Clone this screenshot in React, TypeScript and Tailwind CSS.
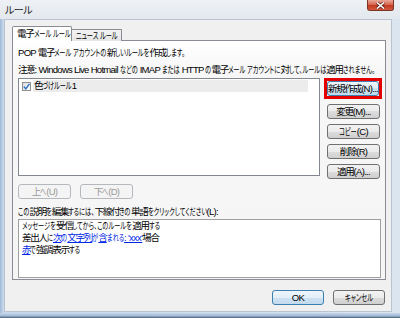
import React, { useLayoutEffect, useRef, useState } from 'react';

const font = "font-['Liberation_Sans','Noto_Sans_CJK_JP',sans-serif] [font-feature-settings:'palt']";

// kana are drawn narrower in the original UI font, so squeeze them
const Kana: React.FC<{ text: string }> = ({ text }) => {
  const ref = useRef<HTMLSpanElement>(null);
  const [mr, setMr] = useState(0);
  useLayoutEffect(() => {
    if (ref.current) setMr(-ref.current.offsetWidth * 0.35);
  }, [text]);
  return (
    <span ref={ref} className="inline-block origin-left scale-x-[0.65]" style={{ marginRight: mr }}>
      {text}
    </span>
  );
};

const J: React.FC<{ children: string }> = ({ children }) => {
  const parts = children.match(/[\u3000-\u30ff\uff00-\uffef]+|[\u4e00-\u9fff]+|[^\u3000-\u30ff\uff00-\uffef\u4e00-\u9fff]+/g) || [];
  return (
    <>
      {parts.map((p, i) => {
        if (/^[\u3000-\u30ff\uff00-\uffef]/.test(p)) return <Kana key={i} text={p} />;
        if (/^[\u4e00-\u9fff]/.test(p)) return <span key={i} className="tracking-[-1.2px]">{p}</span>;
        return <span key={i} className="whitespace-pre tracking-[-0.7px]">{p}</span>;
      })}
    </>
  );
};

const Btn: React.FC<{ label: string; w?: string; disabled?: boolean; def?: boolean }> = ({ label, w = 'w-[53px]', disabled, def }) => {
  let cls = 'border-[#707070] bg-[linear-gradient(#f2f2f2_0%,#ebebeb_50%,#dddddd_50%,#cfcfcf_100%)] text-black';
  if (disabled) cls = 'border-[#b5b9bd] bg-[#f4f4f4] text-[#9a9a9a]';
  if (def) cls = 'border-[#3c7fb1] bg-[linear-gradient(#eef5fb_0%,#e3eef8_50%,#cfe2f1_50%,#c3daee_100%)] text-black';
  return (
    <div className={`${w} h-[15px] rounded-[3px] border flex items-center justify-center whitespace-nowrap text-[9.5px] leading-none ${cls}`}>
      <span>
        <J>{label}</J>
      </span>
    </div>
  );
};

export default function App() {
  return (
    <div className={`w-[400px] h-[318px] bg-[#e4e9ef] flex flex-col overflow-hidden text-black ${font}`}>
      {/* title bar */}
      <div className="h-[19px] flex items-start justify-between pl-[5px] pr-[6px] bg-[linear-gradient(#eef1f5,#e3e8ee)]">
        <span className="text-[10px] pt-[3px] text-[#1a1a1a] whitespace-nowrap tracking-[-0.5px]">ルール</span>
        <div className="w-[27px] h-[11px] rounded-b-[3px] border border-t-0 border-[#7a3428] bg-[linear-gradient(#e9a99a,#d7604a_50%,#c2381f_50%,#d25a3e)] flex items-center justify-center">
          <svg width="9" height="7" viewBox="0 0 9 7">
            <path d="M1 0.5 L8 6.5 M8 0.5 L1 6.5" stroke="#5a2018" strokeWidth="3" />
            <path d="M1 0.5 L8 6.5 M8 0.5 L1 6.5" stroke="#ffffff" strokeWidth="1.6" />
          </svg>
        </div>
      </div>

      <div className="flex-1 flex pl-[1px] pr-[1px] bg-[linear-gradient(90deg,#9db8d6,#c6d7ea_3px,#dbe5f0)]">
        <div className="ml-[3px] w-[388px] h-[293px] border border-[#b9c4d0] bg-[#f0f0f0] flex flex-col pl-[7px] pr-[6px] pt-[6px]">
          {/* tabs */}
          <div className="flex items-end h-[15px] relative z-10 text-[9.5px] leading-none whitespace-nowrap">
            <div className="h-[15px] w-[60px] bg-white border border-b-0 border-[#898c95] rounded-t-[2px] flex items-center pl-[4px]">
              <span><J>電子メール ルール</J></span>
            </div>
            <div className="h-[12px] w-[50px] border border-l-0 border-b-0 border-[#898c95] bg-[linear-gradient(#f3f3f3,#e6e6e6)] flex items-center pl-[4px]">
              <span><J>ニュース ルール</J></span>
            </div>
          </div>

          {/* tab panel */}
          <div className="-mt-[1px] w-[374px] h-[240px] border border-[#898c95] bg-[linear-gradient(#ffffff,#f7f7f7_12%,#f5f5f5)] flex flex-col pl-[5px] text-[9.5px] leading-[12px]">
            <div className="mt-[6px] h-[12px] whitespace-nowrap">
              <J>POP 電子メール アカウントの新しいルールを作成します。</J>
            </div>
            <div className="mt-[5px] h-[12px] whitespace-nowrap">
              <J>注意: Windows Live Hotmail などの IMAP または HTTP の電子メール アカウントに対して、ルールは適用されません。</J>
            </div>

            <div className="mt-[2px] flex">
              <div className="w-[302px] h-[98px] border border-[#828790] bg-white pt-[1px] pl-[3px] pr-[11px]">
                <div className="flex items-center h-[12px]">
                  <div className="w-[9px] h-[9px] border border-[#8e8f8f] bg-[linear-gradient(135deg,#dcdcdc,#ffffff)] flex items-center justify-center">
                    <svg width="7" height="7" viewBox="0 0 7 7">
                      <path d="M0.8 3.6 L2.8 5.8 L6.4 0.8" stroke="#2b6fc2" strokeWidth="1.4" fill="none" />
                    </svg>
                  </div>
                  <div className="ml-[2px] flex-1 h-[12px] bg-[#ececec] pl-[1px] whitespace-nowrap">
                    <J>色づけルール1</J>
                  </div>
                </div>
              </div>

              <div className="ml-[4px] flex flex-col gap-[5px]">
                <div className="border-[3px] border-[#e50000]">
                  <Btn label="新規作成(N)..." w="w-[52px]" def />
                </div>
                <div className="pl-[3px] flex flex-col gap-[5px]">
                  <Btn label="変更(M)..." />
                  <Btn label="コピー(C)" />
                  <Btn label="削除(R)" />
                  <Btn label="適用(A)..." />
                </div>
              </div>
            </div>

            <div className="mt-[5px] flex gap-[9px]">
              <Btn label="上へ(U)" disabled />
              <Btn label="下へ(D)" disabled />
            </div>

            <div className="mt-[7px] h-[12px] whitespace-nowrap">
              <J>この説明を編集するには、下線付きの単語をクリックしてください(L):</J>
            </div>

            <div className="mt-[1px] w-[363px] h-[59px] border border-[#a0a0a0] bg-white pl-[3px] pt-0 leading-[12px]">
              <div className="whitespace-nowrap">
                <J>メッセージを受信してから、このルールを適用する</J>
              </div>
              <div className="whitespace-nowrap">
                <J>差出人に</J>
                <span className="text-[#0026e6] underline">
                  <J>次の文字列が含まれる: 'xxx'</J>
                </span>
                <J>場合</J>
              </div>
              <div className="whitespace-nowrap">
                <span className="text-[#0026e6] underline">
                  <J>赤</J>
                </span>
                <J>で強調表示する</J>
              </div>
            </div>
          </div>

          {/* bottom buttons */}
          <div className="mt-[10px] flex justify-end gap-[9px]">
            <Btn label="OK" w="w-[52px]" def />
            <Btn label="キャンセル" w="w-[52px]" />
          </div>
        </div>
      </div>
      <div className="h-[5px] bg-[linear-gradient(#c6d7ea,#9db8d6_60%,#4a5a6c)]" />
    </div>
  );
}
